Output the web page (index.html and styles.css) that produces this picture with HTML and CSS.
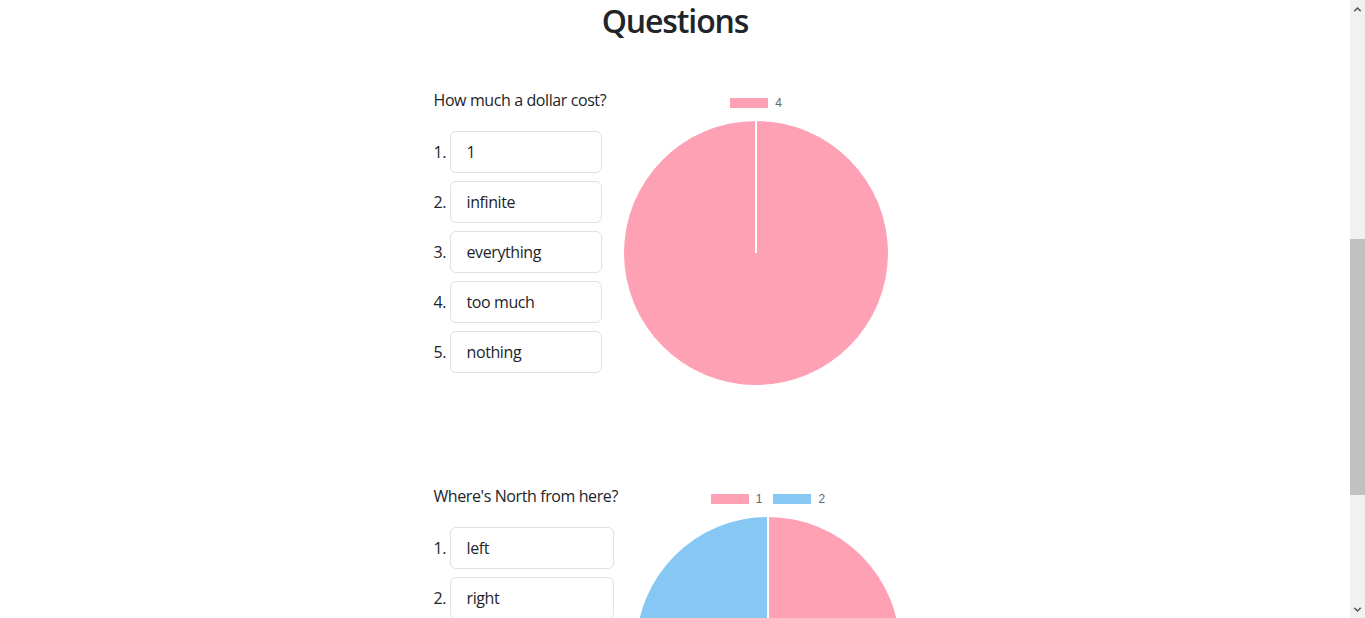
FILE: index.html
```html
<!DOCTYPE html>
<html lang="en">
<head>
<meta charset="utf-8">
<title>Questions</title>
<link rel="stylesheet" href="styles.css">
</head>
<body>
<div class="page">
  <main class="main">
    <h1 class="title">Questions</h1>
    <div class="container">
      <section class="question">
        <div class="q-col">
          <p class="q-text">How much a dollar cost?</p>
          <ol class="answers">
            <li class="answer"><span class="num">1.</span><input class="field" readonly value="1"></li>
            <li class="answer"><span class="num">2.</span><input class="field" readonly value="infinite"></li>
            <li class="answer"><span class="num">3.</span><input class="field" readonly value="everything"></li>
            <li class="answer"><span class="num">4.</span><input class="field" readonly value="too much"></li>
            <li class="answer"><span class="num">5.</span><input class="field" readonly value="nothing"></li>
          </ol>
        </div>
        <div class="chart">
          <div class="legend">
            <span class="legend-item"><span class="swatch pink"></span>4</span>
          </div>
          <svg class="pie" width="264" height="264" viewBox="0 0 264 264">
            <circle cx="132" cy="132" r="132" fill="#ffa1b5"/>
            <line x1="132" y1="132" x2="132" y2="0" stroke="#fff" stroke-width="2"/>
          </svg>
        </div>
      </section>

      <section class="question">
        <div class="q-col">
          <p class="q-text">Where's North from here?</p>
          <ol class="answers">
            <li class="answer"><span class="num">1.</span><input class="field" readonly value="left"></li>
            <li class="answer"><span class="num">2.</span><input class="field" readonly value="right"></li>
          </ol>
        </div>
        <div class="chart">
          <div class="legend">
            <span class="legend-item"><span class="swatch pink"></span>1</span>
            <span class="legend-item"><span class="swatch blue"></span>2</span>
          </div>
          <svg class="pie" width="264" height="264" viewBox="0 0 264 264">
            <path d="M132 132 L132 0 A132 132 0 0 1 132 264 Z" fill="#ffa1b5"/>
            <path d="M132 132 L132 264 A132 132 0 0 1 132 0 Z" fill="#86c7f3"/>
            <line x1="132" y1="0" x2="132" y2="264" stroke="#fff" stroke-width="2"/>
          </svg>
        </div>
      </section>
    </div>
  </main>
  <aside class="scrollbar">
    <div class="arrow up"><svg width="9" height="6" viewBox="0 0 9 6"><path d="M0.5 5 L4.5 1 L8.5 5 L7 5.5 L4.5 3 L2 5.5 Z" fill="#505050"/></svg></div>
    <div class="track"><div class="thumb"></div></div>
    <div class="arrow down"><svg width="9" height="6" viewBox="0 0 9 6"><path d="M0.5 1 L4.5 5 L8.5 1 L7 0.5 L4.5 3 L2 0.5 Z" fill="#505050"/></svg></div>
  </aside>
</div>
</body>
</html>
```

FILE: styles.css
```css
* { box-sizing: border-box; }
html, body {
  margin: 0;
  padding: 0;
  height: 618px;
  overflow: hidden;
  background: #fff;
}
body {
  font-family: "Open Sans", "Noto Sans", sans-serif;
  font-size: 16px;
  line-height: 24px;
  letter-spacing: -0.4px;
  color: #212529;
}
.page {
  display: flex;
  height: 618px;
}
.main {
  flex: 1;
  min-width: 0;
}
.title {
  margin: 2px 0 0;
  font-size: 32px;
  line-height: 38px;
  font-weight: 600;
  letter-spacing: -1.1px;
  text-align: center;
  color: #212529;
}
.container {
  width: 483px;
  margin: 48px auto 0;
}
.question {
  display: flex;
  align-items: flex-start;
  margin-bottom: 99px;
}
.q-col {
  display: flex;
  flex-direction: column;
  width: max-content;
}
.q-text {
  margin: 0 0 19px;
  white-space: nowrap;
}
.answers {
  list-style: none;
  margin: 0;
  padding: 0;
  display: flex;
  flex-direction: column;
  gap: 8px;
}
.answer {
  display: flex;
  align-items: center;
}
.num {
  width: 16px;
  flex: none;
}
.field {
  flex: 1;
  width: 0;
  min-width: 0;
  margin-right: 4px;
  height: 42px;
  padding: 8px 16px;
  border: 1px solid #dee2e6;
  border-radius: 6px;
  font: inherit;
  letter-spacing: -0.4px;
  color: #212529;
  background: #fff;
  outline: none;
}
.chart {
  margin-left: 18px;
  width: 264px;
  display: flex;
  flex-direction: column;
  align-items: center;
}
.legend {
  margin-top: 10px;
  height: 10px;
  display: flex;
  gap: 11px;
  font-family: "Liberation Sans", Arial, sans-serif;
  font-size: 12px;
  line-height: 10px;
  letter-spacing: 0;
  color: #666;
}
.legend-item {
  display: flex;
  align-items: center;
  gap: 7px;
}
.swatch {
  width: 38px;
  height: 10px;
  display: block;
}
.pink { background: #ffa1b5; }
.blue { background: #86c7f3; }
.pie {
  display: block;
  margin-top: 13px;
}
.scrollbar {
  width: 15px;
  flex: none;
  background: #f1f1f1;
  display: flex;
  flex-direction: column;
}
.arrow {
  height: 17px;
  display: flex;
  align-items: center;
  justify-content: center;
  flex: none;
}
.track {
  flex: 1;
  padding-top: 222px;
}
.thumb {
  height: 256px;
  background: #c1c1c1;
}
```
